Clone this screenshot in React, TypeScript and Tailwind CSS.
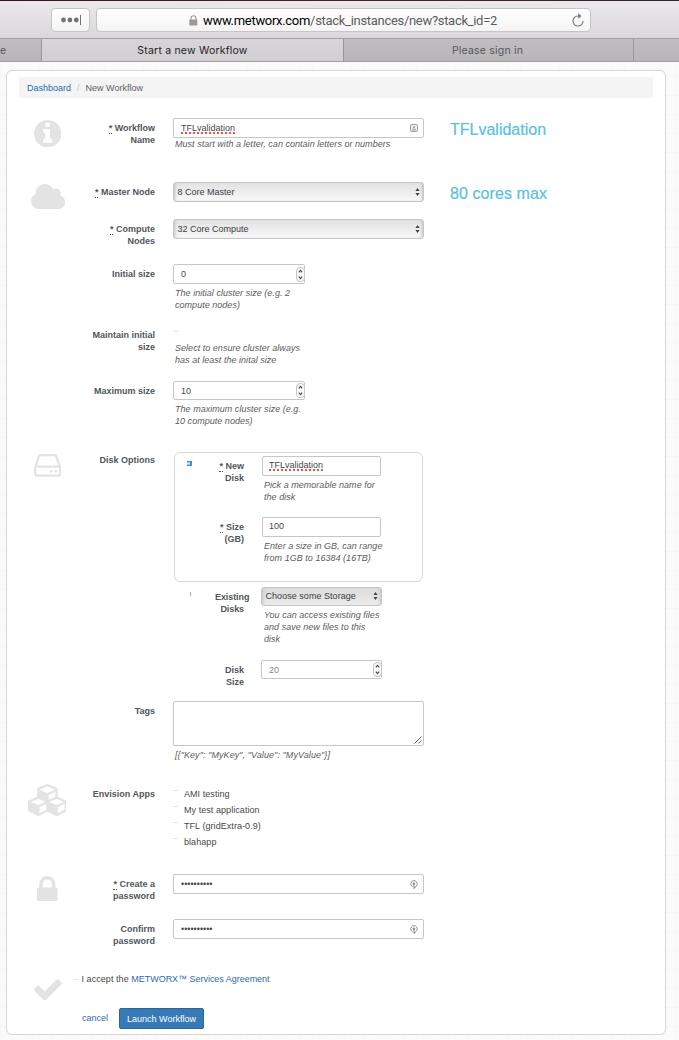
import type { ReactNode } from "react";

function Glyph({ box, d, className }: { box: string; d: string; className: string }) {
  return (
    <svg viewBox={box} className={`fill-[#e3e3e3] ${className}`}>
      <path transform="scale(1,-1)" d={d} />
    </svg>
  );
}

const INFO =
  "M1024 160v160q0 14 -9 23t-23 9h-96v512q0 14 -9 23t-23 9h-320q-14 0 -23 -9t-9 -23v-160q0 -14 9 -23t23 -9h96v-320h-96q-14 0 -23 -9t-9 -23v-160q0 -14 9 -23t23 -9h448q14 0 23 9t9 23zM896 1056v160q0 14 -9 23t-23 9h-192q-14 0 -23 -9t-9 -23v-160q0 -14 9 -23t23 -9h192q14 0 23 9t9 23zM1536 640q0 -209 -103 -385.5t-279.5 -279.5t-385.5 -103t-385.5 103t-279.5 279.5t-103 385.5t103 385.5t279.5 279.5t385.5 103t385.5 -103t279.5 -279.5t103 -385.5z";
const CLOUD =
  "M1920 384q0 -159 -112.5 -271.5t-271.5 -112.5h-1088q-185 0 -316.5 131.5t-131.5 316.5q0 132 71 241.5t187 163.5q-2 28 -2 43q0 212 150 362t362 150q158 0 286.5 -88t187.5 -230q70 62 166 62q106 0 181 -75t75 -181q0 -75 -41 -138q129 -30 213 -134.5t84 -239.5z";
const HDD =
  "M1040 320q0 -33 -23.5 -56.5t-56.5 -23.5t-56.5 23.5t-23.5 56.5t23.5 56.5t56.5 23.5t56.5 -23.5t23.5 -56.5zM1296 320q0 -33 -23.5 -56.5t-56.5 -23.5t-56.5 23.5t-23.5 56.5t23.5 56.5t56.5 23.5t56.5 -23.5t23.5 -56.5zM1408 160v320q0 13 -9.5 22.5t-22.5 9.5h-1216q-13 0 -22.5 -9.5t-9.5 -22.5v-320q0 -13 9.5 -22.5t22.5 -9.5h1216q13 0 22.5 9.5t9.5 22.5zM178 640h1180l-157 482q-4 13 -16 21.5t-26 8.5h-782q-14 0 -26 -8.5t-16 -21.5zM1536 480v-320q0 -66 -47 -113t-113 -47h-1216q-66 0 -113 47t-47 113v320q0 25 16 75l197 606q17 53 63 86t101 33h782q55 0 101 -33t63 -86l197 -606q16 -50 16 -75z";
const CUBES =
  "M640 -96l384 192v314l-384 -164v-342zM576 358l404 173l-404 173l-404 -173zM1664 -96l384 192v314l-384 -164v-342zM1600 358l404 173l-404 173l-404 -173zM1152 651l384 165v266l-384 -164v-267zM1088 1030l441 189l-441 189l-441 -189zM2176 512v-416q0 -36 -19 -67t-52 -47l-448 -224q-25 -14 -57 -14t-57 14l-448 224q-5 2 -7 4q-2 -2 -7 -4l-448 -224q-25 -14 -57 -14t-57 14l-448 224q-33 16 -52 47t-19 67v416q0 38 21.5 70t56.5 48l434 186v400q0 38 21.5 70t56.5 48l448 192q23 10 50 10t50 -10l448 -192q35 -16 56.5 -48t21.5 -70v-400l434 -186q36 -16 57 -48t21 -70z";
const LOCK =
  "M320 768h512v192q0 106 -75 181t-181 75t-181 -75t-75 -181v-192zM1152 672v-576q0 -40 -28 -68t-68 -28h-960q-40 0 -68 28t-28 68v576q0 40 28 68t68 28h32v192q0 184 132 316t316 132t316 -132t132 -316v-192h32q40 0 68 -28t28 -68z";
const CHECK =
  "M1671 970q0 -40 -28 -68l-724 -724l-136 -136q-28 -28 -68 -28t-68 28l-136 136l-362 362q-28 28 -28 68t28 68l136 136q28 28 68 28t68 -28l294 -295l656 657q28 28 68 28t68 -28l136 -136q28 -28 28 -68z";

function Label({ lines, required, className }: { lines: string[]; required?: boolean; className: string }) {
  return (
    <div className={`shrink-0 text-right font-bold whitespace-nowrap text-[#50565c] ${className}`}>
      {lines.map((line, i) => (
        <div key={line}>
          {required && i === 0 && (
            <>
              <span className="border-b border-dotted border-[#50565c]">*</span>{" "}
            </>
          )}
          {line}
        </div>
      ))}
    </div>
  );
}

function Row({
  height,
  icon,
  label,
  required,
  labelPad = "pt-1",
  children,
}: {
  height: string;
  icon?: ReactNode;
  label: string[];
  required?: boolean;
  labelPad?: string;
  children: ReactNode;
}) {
  return (
    <div className={`flex ${height}`}>
      <div className="flex w-[81px] shrink-0 items-start justify-center">{icon}</div>
      <Label lines={label} required={required} className={`mr-[18px] w-[67px] ${labelPad}`} />
      {children}
    </div>
  );
}

function Input({
  className,
  pad = "pl-[7px]",
  children,
  end,
}: {
  className: string;
  pad?: string;
  children?: ReactNode;
  end?: ReactNode;
}) {
  return (
    <div className={`flex items-center justify-between rounded-[2px] border border-[#c6c6c6] bg-white ${pad} ${className}`}>
      <span>{children}</span>
      {end}
    </div>
  );
}

function Misspelt({ children }: { children: string }) {
  return (
    <span className="underline decoration-[#f0504a] decoration-dotted decoration-[1.5px] underline-offset-[0.5px] [text-decoration-skip-ink:none]">
      {children}
    </span>
  );
}

function Stepper() {
  return (
    <svg viewBox="0 0 9 15" className="-mr-px h-[15px] w-[9px] shrink-0">
      <rect x="0.5" y="0.5" width="8" height="14" rx="3.5" fill="#fafafa" stroke="#c4c4c4" />
      <path d="M2.8 5.3 4.5 3.4 6.2 5.3M2.8 9.7 4.5 11.6 6.2 9.7" fill="none" stroke="#444" strokeWidth="1.1" />
    </svg>
  );
}

function Select({ className, children }: { className: string; children: string }) {
  return (
    <div
      className={`flex items-center justify-between rounded-[3px] border border-[#c6c6c6] bg-linear-to-b pr-[3px] pl-[3.5px] text-[#3c3c3c] shadow-[inset_3px_0_3px_-2px_#c2c2c2,inset_-3px_0_3px_-2px_#c2c2c2] ${className}`}
    >
      <span>{children}</span>
      <svg viewBox="0 0 5 8" className="h-2 w-[5px] fill-[#444]">
        <path d="M2.5 0 4.6 3H.4zM2.5 8 .4 5h4.2z" />
      </svg>
    </div>
  );
}

function Help({ className, lines }: { className?: string; lines: string[] }) {
  return (
    <div className={`pl-0.5 tracking-[0.03px] whitespace-nowrap text-[#5c5c5c] italic ${className ?? ""}`}>
      {lines.map((l) => (
        <div key={l}>{l}</div>
      ))}
    </div>
  );
}

function CardIcon() {
  return (
    <svg viewBox="0 0 8 8" className="mr-[5px] h-2 w-2">
      <rect x="0.5" y="0.5" width="7" height="7" rx="0.8" fill="#ececec" stroke="#a0a0a0" />
      <path d="M4 1.8v2.4M2 5.8h4M3 3.8h2" stroke="#909090" strokeWidth="0.9" />
    </svg>
  );
}

function KeyIcon() {
  return (
    <svg viewBox="0 0 8 9" className="mr-[5px] h-[9px] w-2">
      <path d="M2.7 6.8A3.2 3.2 0 1 1 5.3 6.8" fill="none" stroke="#8e8e8e" />
      <circle cx="4" cy="3.7" r="1.2" fill="#8e8e8e" />
      <path d="M4 3.5V9M4 7.6h1.6" stroke="#8e8e8e" />
    </svg>
  );
}

function Dash({ className }: { className: string }) {
  return <span className={`h-px w-[5px] shrink-0 bg-[#e3e3e3] ${className}`} />;
}

function Browser() {
  return (
    <header className="font-[Inter,sans-serif]">
      <div className="h-px bg-linear-to-r from-[#35161c] via-[#4a2028] to-[#30252b]" />
      <div className="flex h-[37px] bg-linear-to-b from-[#ece9ec] to-[#d9d7d9] pt-[7px]">
        <div className="ml-[51px] flex h-[24px] w-[39px] items-center justify-center rounded-[4px] border border-[#c6c4c6] bg-linear-to-b from-white to-[#f4f4f4]">
          <svg viewBox="0 0 22 10" className="h-[10px] w-[22px] fill-[#737373]">
            <circle cx="3.5" cy="5" r="2.4" />
            <circle cx="9.9" cy="5" r="2.4" />
            <circle cx="16.3" cy="5" r="2.4" />
            <rect x="20" y="0" width="1" height="10" />
          </svg>
        </div>
        <div className="ml-1.5 flex h-[24px] w-[495px] items-center rounded-[4px] border border-[#c6c4c6] bg-linear-to-b from-white to-[#f4f4f4] whitespace-nowrap">
          <svg viewBox="0 0 9 11" className="ml-[92px] h-[11px] w-[9px]">
            <path d="M2 5V3.2a2.5 2.5 0 0 1 5 0V5" fill="none" stroke="#999" strokeWidth="1.1" />
            <rect x="0.3" y="4.6" width="8" height="5.9" rx="0.8" fill="#999" />
          </svg>
          <div className="ml-[5px] w-[294px] pt-px font-[Roboto,sans-serif] text-[13px] tracking-[-0.3px] text-[#5c5c5c]">
            <span className="text-black">www.metworx.com</span>/stack_instances/new?stack_id=2
          </div>
          <svg viewBox="0 0 12 14" className="ml-[75px] h-[14px] w-3">
            <path d="M7 3H6a5 5 0 1 0 5 5" fill="none" stroke="#777" strokeWidth="1.1" />
            <path d="M6.2.3 9.5 3 6.2 5.7z" fill="#777" />
          </svg>
        </div>
      </div>
      <div className="flex h-[24px] border-y border-[#a09fa1] bg-linear-to-b from-[#bfbdbf] to-[#b8b6b8] text-[10.5px] leading-[24px] tracking-[0.2px] text-[#58565a]">
        <div className="w-[42px] border-r border-[#989799]">e</div>
        <div className="w-[302px] border-r border-[#989799] bg-linear-to-b from-[#d7d5d7] to-[#d1cfd1] text-center text-[#1e1e1e]">
          Start a new Workflow
        </div>
        <div className="w-[290px] border-r border-[#989799] pr-0.5 text-center">Please sign in</div>
      </div>
    </header>
  );
}

const apps = ["AMI testing", "My test application", "TFL (gridExtra-0.9)", "blahapp"];

export default function App() {
  return (
    <div className="h-[1040px] w-[679px] overflow-hidden bg-[#fafafa] bg-[linear-gradient(#f6f6f6_1px,transparent_1px),linear-gradient(90deg,#f7f7f7_1px,transparent_1px)] bg-size-[17px_19px,13px_23px] font-['Liberation_Sans',sans-serif] text-[9px] leading-3 text-[#484848]">
      <Browser />
      <main className="mt-2 ml-1.5 h-[965px] w-[660px] rounded-[6px] border border-[#d6d6d6] bg-white">
        <nav className="mt-1.5 ml-3 flex h-[21px] w-[634px] items-center rounded-[2px] bg-[#f4f4f4] pl-2 text-[#606060]">
          <a className="text-[#2b6cab]">Dashboard</a>
          <span className="mx-[6px] text-[#c4c4c4]">/</span>
          <span>New Workflow</span>
        </nav>

        <form className="mt-5">
          <Row
            height="h-16"
            label={["Workflow", "Name"]}
            required
            icon={<Glyph box="0 -1408 1536 1536" d={INFO} className="mt-[2px] h-[27.4px] w-[27.4px]" />}
          >
            <div className="w-[251px]">
              <Input className="h-5" end={<CardIcon />}>
                <Misspelt>TFLvalidation</Misspelt>
              </Input>
              <Help lines={["Must start with a letter, can contain letters or numbers"]} />
            </div>
            <h2 className="ml-[26px] pt-[2px] text-base leading-5 text-[#5bc0de] [-webkit-text-stroke:0.2px_#5bc0de]">
              TFLvalidation
            </h2>
          </Row>

          <Row
            height="h-[37px]"
            label={["Master Node"]}
            required
            icon={<Glyph box="0 -1408 1920 1408" d={CLOUD} className="mt-[2px] ml-px h-[25.1px] w-[34.3px]" />}
          >
            <Select className="h-5 w-[251px] from-[#e2e2e2] to-[#f8f8f8]">8 Core Master</Select>
            <h2 className="ml-[26px] pt-[2px] text-base leading-5 tracking-[0.08px] text-[#5bc0de] [-webkit-text-stroke:0.2px_#5bc0de]">
              80 cores max
            </h2>
          </Row>

          <Row height="h-[45px]" label={["Compute", "Nodes"]} required>
            <Select className="h-5 w-[251px] from-[#e2e2e2] to-[#f8f8f8]">32 Core Compute</Select>
          </Row>

          <Row height="h-[61px]" label={["Initial size"]}>
            <div className="w-[132px]">
              <Input className="h-5" end={<Stepper />}>0</Input>
              <Help className="pt-[3px]" lines={["The initial cluster size (e.g. 2", "compute nodes)"]} />
            </div>
          </Row>

          <Row height="h-14" label={["Maintain initial", "size"]}>
            <div className="flex flex-col">
              <Dash className="mt-1.5" />
              <Help className="pt-[10px]" lines={["Select to ensure cluster always", "has at least the inital size"]} />
            </div>
          </Row>

          <Row height="h-[71px]" label={["Maximum size"]}>
            <div className="w-[132px]">
              <Input className="h-[19px]" end={<Stepper />}>10</Input>
              <Help className="pt-[3px]" lines={["The maximum cluster size (e.g.", "10 compute nodes)"]} />
            </div>
          </Row>

          <Row
            height="h-[249px]"
            label={["Disk Options"]}
            labelPad="pt-[2px]"
            icon={<Glyph box="0 -1280 1536 1280" d={HDD} className="mt-[2px] h-[22.9px] w-[27.4px]" />}
          >
            <div className="w-[251px] pl-px">
              <div className="flex h-[130px] w-[249px] rounded-[6px] border border-[#d9d9d9] pt-[3px]">
                <svg viewBox="0 0 5 5" className="mt-[5px] ml-3 h-[5px] w-[5px]">
                  <path d="M0 0h5v5H0z" fill="#3b8ef0" />
                  <path d="M0 1.4h3v2.2H0z" fill="#dcecff" />
                </svg>
                <div className="ml-[22px]">
                  <div className="flex h-[61px]">
                    <Label lines={["New", "Disk"]} required className="mr-[18px] w-[30px] pt-1" />
                    <div className="w-[119px]">
                      <Input className="h-5 pb-0.5" pad="pl-1.5">
                        <Misspelt>TFLvalidation</Misspelt>
                      </Input>
                      <Help className="pt-[3px]" lines={["Pick a memorable name for", "the disk"]} />
                    </div>
                  </div>
                  <div className="flex">
                    <Label lines={["Size", "(GB)"]} required className="mr-[18px] w-[30px] pt-1" />
                    <div className="w-[119px]">
                      <Input className="h-5 pb-0.5" pad="pl-1.5">100</Input>
                      <Help
                        className="pt-[3px] tracking-[-0.03px]"
                        lines={["Enter a size in GB, can range", "from 1GB to 16384 (16TB)"]}
                      />
                    </div>
                  </div>
                </div>
              </div>
              <div className="mt-[5px] flex h-[73px]">
                <span className="mt-[5px] ml-4 h-1 w-px bg-[#b0b0b0]" />
                <div className="ml-6 w-[29px] pt-1 text-right font-bold tracking-[-0.08px] text-[#50565c]">
                  <div>Existing</div>
                  <div>Disks</div>
                </div>
                <div className="ml-[17px] w-[121px]">
                  <Select className="h-[19px] from-[#dcdcdc] to-[#ececec] pb-0.5 tracking-[0.04px]">
                    Choose some Storage
                  </Select>
                  <Help
                    className="ml-px pt-[3px] tracking-[-0.03px]"
                    lines={["You can access existing files", "and save new files to this", "disk"]}
                  />
                </div>
              </div>
              <div className="flex">
                <Label lines={["Disk", "Size"]} className="ml-[41px] w-[29px] pt-1" />
                <Input className="ml-[17px] h-[19px] w-[121px] text-[#8a8a8a]" end={<Stepper />}>
                  20
                </Input>
              </div>
            </div>
          </Row>

          <Row height="h-[83px]" label={["Tags"]}>
            <div className="w-[251px]">
              <div className="flex h-[45px] items-end justify-end rounded-[2px] border border-[#c6c6c6] p-px">
                <svg viewBox="0 0 8 8" className="h-2 w-2">
                  <path d="M.5 7.5l7-7M4.5 7.5l3-3" stroke="#555" strokeWidth="0.9" />
                </svg>
              </div>
              <Help className="pt-[3px] tracking-[0.08px]" lines={['[{"Key": "MyKey", "Value": "MyValue"}]']} />
            </div>
          </Row>

          <Row
            height="h-[90px]"
            label={["Envision Apps"]}
            icon={<Glyph box="0 -1536 2176 1792" d={CUBES} className="mt-0 mr-px h-8 w-[38.9px]" />}
          >
            <div className="flex flex-col gap-1 pt-1 tracking-[0.06px]">
              {apps.map((app) => (
                <div key={app} className="flex">
                  <Dash className="mt-[2px] mr-1.5" />
                  {app}
                </div>
              ))}
            </div>
          </Row>

          <Row
            height="h-[45px]"
            label={["Create a", "password"]}
            required
            icon={<Glyph box="0 -1408 1152 1408" d={LOCK} className="mt-[2px] h-[25.1px] w-[20.6px]" />}
          >
            <Input className="h-5 w-[251px]" end={<KeyIcon />}>••••••••••</Input>
          </Row>

          <Row height="h-[54px]" label={["Confirm", "password"]}>
            <Input className="h-5 w-[251px]" end={<KeyIcon />}>••••••••••</Input>
          </Row>

          <div className="flex">
            <div className="w-[67px] pt-[3.5px] pl-[27px]">
              <Glyph box="121 -1322 1550 1308" d={CHECK} className="h-[23.4px] w-[27.7px]" />
            </div>
            <div>
              <div className="flex">
                <Dash className="mt-1.5 mr-[2.5px]" />
                <span className="tracking-[0.06px] whitespace-pre">I accept the </span>
                <a className="tracking-[-0.03px] text-[#2b6cab]">METWORX™ Services Agreement</a>
              </div>
              <div className="mt-[23px] flex items-start pl-2">
                <a className="pt-1 text-[#2b6cab]">cancel</a>
                <button
                  type="button"
                  className="ml-[11px] h-[21px] w-[85px] rounded-[2px] border border-[#2c6496] bg-[#377ab6] text-center whitespace-nowrap text-white"
                >
                  Launch Workflow
                </button>
              </div>
            </div>
          </div>
        </form>
      </main>
    </div>
  );
}
